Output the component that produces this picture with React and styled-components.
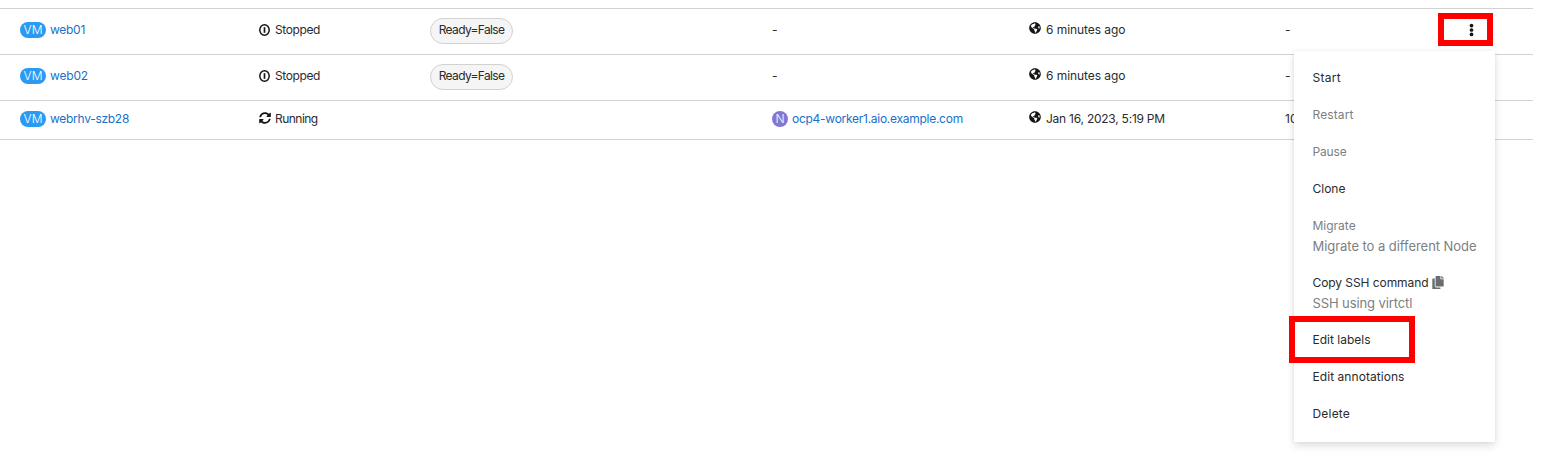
import React from 'react';
import styled, { createGlobalStyle } from 'styled-components';
import { FaSyncAlt, FaGlobeAmericas, FaCopy } from 'react-icons/fa';

const GlobalStyle = createGlobalStyle`
  body {
    margin: 0;
    background: #fff;
    color: #2b2b2b;
    font: 400 12px/18px Inter, "Liberation Sans", sans-serif;
  }
`;

const Page = styled.main`
  position: relative;
  width: 1543px;
  height: 470px;
  padding-top: 8px;
  box-sizing: border-box;
  overflow: hidden;
`;

const Table = styled.div`
  width: 1533px;
  border-top: 1px solid #d2d2d2;
`;

const Row = styled.div`
  display: grid;
  grid-template-columns: 239px 171px 342px 257px 256px 177px 1fr;
  align-items: center;
  height: ${(p) => (p.$compact ? 39 : 46)}px;
  padding: 0 0 ${(p) => (p.$compact ? 2 : 3)}px 20px;
  box-sizing: border-box;
  border-bottom: 1px solid #d2d2d2;
`;

const Cell = styled.div`
  display: flex;
  align-items: center;
  height: 18px;
  gap: ${(p) => p.$gap || 0}px;
  white-space: nowrap;
`;

const Text = styled.span`
  letter-spacing: ${(p) => p.$tracking || 0}px;
`;

const Link = styled(Text).attrs({ as: 'a' })`
  color: #1a70c9;
`;

const Badge = styled.span`
  display: flex;
  align-items: center;
  justify-content: center;
  width: ${(p) => (p.$node ? 16 : 26)}px;
  height: 16px;
  border-radius: 8px;
  background: ${(p) => (p.$node ? '#8476d1' : '#2b9af3')};
  color: #fff;
  font-size: 12px;
  font-weight: 300;
`;

const Condition = styled.span`
  display: flex;
  align-items: center;
  justify-content: center;
  width: 83px;
  height: 26px;
  margin-top: 2px;
  padding-bottom: 2px;
  box-sizing: border-box;
  border: 1px solid #d2d2d2;
  border-radius: 13px;
  background: #f5f5f5;
  letter-spacing: -0.66px;
`;

const StatusIcon = styled.span`
  display: flex;
  width: 11px;
  height: 12px;
  align-items: center;
  color: #151515;
`;

const SyncIcon = styled(FaSyncAlt)`
  width: 12px;
  height: 12px;
  flex: none;
  margin-top: -2px;
`;

const GlobeIcon = styled(FaGlobeAmericas)`
  width: 12px;
  height: 12px;
  margin-bottom: 4px;
  color: #151515;
`;

const Highlight = styled.div`
  position: absolute;
  box-sizing: border-box;
  border: 6px solid #ff0000;
`;

const KebabHighlight = styled(Highlight)`
  left: 1438px;
  top: 13px;
  width: 55px;
  height: 33px;
`;

const LabelHighlight = styled(Highlight)`
  left: 1289px;
  top: 316px;
  width: 126px;
  height: 47px;
`;

const Menu = styled.ul`
  position: absolute;
  left: 1294px;
  top: 51px;
  width: 201px;
  height: 391px;
  margin: 0;
  padding: 8px 0;
  box-sizing: border-box;
  list-style: none;
  background: #fff;
  box-shadow: 0 4px 8px rgba(3, 3, 3, 0.12), 0 0 4px rgba(3, 3, 3, 0.06);
`;

const MenuItem = styled.li`
  display: flex;
  flex-direction: column;
  padding: 10px 18.5px 9px;
  color: ${(p) => (p.$disabled ? '#7c7f83' : '#2b2b2b')};
  white-space: nowrap;
`;

const ItemLabel = styled.span`
  display: flex;
  align-items: center;
  gap: 4px;
  height: 18px;
  letter-spacing: ${(p) => p.$tracking || 0}px;
`;

const Description = styled.span`
  height: 20px;
  padding-top: 2px;
  box-sizing: border-box;
  color: #7c7f83;
  font-size: 13px;
  line-height: 19px;
  letter-spacing: ${(p) => p.$tracking || 0}px;
`;

const CopyIcon = styled(FaCopy)`
  width: 12px;
  height: 13px;
  margin-left: -1px;
  margin-top: -2px;
  color: #6a6e73;
`;

const OffIcon = () => (
  <svg width="11" height="12" viewBox="0 0 11 12" fill="none" stroke="currentColor">
    <ellipse cx="5.5" cy="6" rx="4.7" ry="5.2" strokeWidth="1.5" />
    <path d="M5.5 3.2v5.6" strokeWidth="1.7" />
  </svg>
);

const KebabIcon = () => (
  <svg width="5" height="14" viewBox="0 0 5 14" fill="#151515">
    <circle cx="2.5" cy="2.6" r="1.85" />
    <circle cx="2.5" cy="7" r="1.85" />
    <circle cx="2.5" cy="11.4" r="1.85" />
  </svg>
);

const Kebab = styled.span`
  display: flex;
  margin-left: 7px;
`;

const machines = [
  { name: 'web01', nt: -0.28, status: 'Stopped', st: -0.38, created: '6 minutes ago', ct: -0.06, ip: '-' },
  { name: 'web02', nt: -0.17, status: 'Stopped', st: -0.38, created: '6 minutes ago', ct: -0.06, ip: '-' },
  {
    name: 'webrhv-szb28', nt: -0.28, status: 'Running', st: -0.52, created: 'Jan 16, 2023, 5:19 PM', ct: -0.24,
    node: 'ocp4-worker1.aio.example.com', ip: '10',
  },
];

const actions = [
  { label: 'Start', t: 0.29 },
  { label: 'Restart', t: 0.11, disabled: true },
  { label: 'Pause', t: -0.17, disabled: true },
  { label: 'Clone' },
  { label: 'Migrate', disabled: true, description: 'Migrate to a different Node', dt: -0.05 },
  { label: 'Copy SSH command', t: -0.07, copy: true, description: 'SSH using virtctl', dt: -0.1 },
  { label: 'Edit labels' },
  { label: 'Edit annotations', t: 0.06 },
  { label: 'Delete', t: 0.19 },
];

export default function App() {
  return (
    <Page>
      <GlobalStyle />
      <Table>
        {machines.map((m, i) => {
          const running = m.status === 'Running';
          return (
            <Row key={m.name} $compact={running}>
              <Cell $gap={4}>
                <Badge>VM</Badge>
                <Link $tracking={m.nt}>{m.name}</Link>
              </Cell>
              <Cell $gap={5}>
                <StatusIcon>{running ? <SyncIcon /> : <OffIcon />}</StatusIcon>
                <Text $tracking={m.st}>{m.status}</Text>
              </Cell>
              <Cell>{!running && <Condition>Ready=False</Condition>}</Cell>
              <Cell $gap={4}>
                {m.node ? (
                  <>
                    <Badge $node>N</Badge>
                    <Link $tracking={-0.27}>{m.node}</Link>
                  </>
                ) : '-'}
              </Cell>
              <Cell $gap={5}>
                <GlobeIcon />
                <Text $tracking={m.ct}>{m.created}</Text>
              </Cell>
              <Cell>{m.ip}</Cell>
              <Cell>{i === 0 && <Kebab><KebabIcon /></Kebab>}</Cell>
            </Row>
          );
        })}
      </Table>
      <Menu>
        {actions.map((a) => (
          <MenuItem key={a.label} $disabled={a.disabled}>
            <ItemLabel $tracking={a.t}>
              {a.label}
              {a.copy && <CopyIcon />}
            </ItemLabel>
            {a.description && <Description $tracking={a.dt}>{a.description}</Description>}
          </MenuItem>
        ))}
      </Menu>
      <KebabHighlight />
      <LabelHighlight />
    </Page>
  );
}
